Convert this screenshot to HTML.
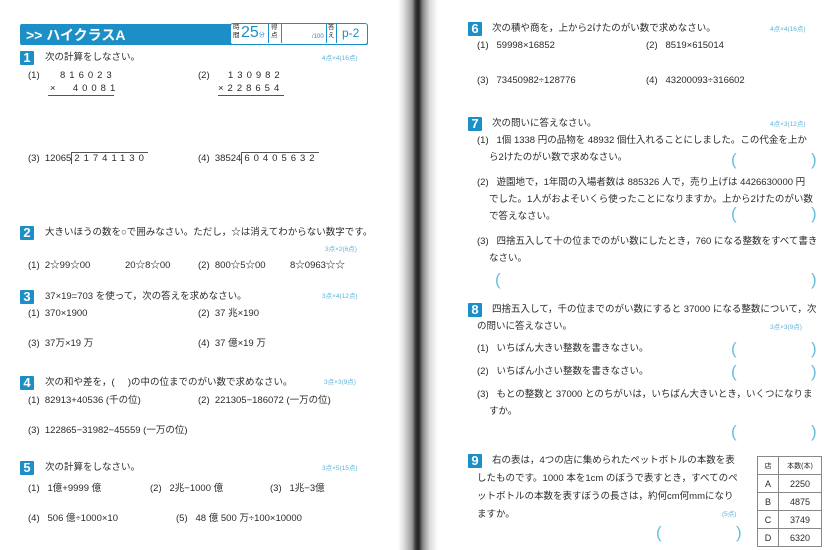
<!DOCTYPE html>
<html><head><meta charset="utf-8"><style>
body{margin:0;width:835px;height:550px;background:#fff;position:relative;overflow:hidden;font-family:"Liberation Sans","Noto Sans CJK JP",sans-serif;color:#2a2a2a}
.t{position:absolute;font-size:9.5px;line-height:12px;white-space:nowrap}
.s{position:absolute;font-size:6.5px;line-height:8px;color:#5fb3d8;white-space:nowrap}
.b{position:absolute;width:14px;height:14px;background:#1b8fc6;color:#fff;font-weight:bold;font-size:13px;line-height:14px;text-align:center;border-radius:1px}
.p{position:absolute;font-size:17px;line-height:20px;color:#6bbde0}
.gut{position:absolute;left:398px;top:0;width:40px;height:550px;background:linear-gradient(90deg,#fff 0%,#ddd 15%,#999 35%,#333 45%,#222 52%,#888 62%,#ddd 80%,#fff 100%)}
.n{letter-spacing:4px}
</style></head><body>
<div class="gut"></div>
<!-- header -->
<div style="position:absolute;left:20px;top:24px;width:348px;height:21px;background:#1b8fc6;border-radius:2px"></div>
<div class="t" style="left:26px;top:28px;font-size:14px;line-height:15px;color:#fff;font-weight:bold">&gt;&gt; ハイクラスA</div>
<div style="position:absolute;left:230px;top:23px;width:136px;height:20px;background:#fff;border:1px solid #1b8fc6;border-radius:3px"></div>
<div class="t" style="left:233px;top:24px;font-size:6.5px;line-height:8px">時<br>間</div>
<div class="t" style="left:241px;top:24px;font-size:16px;line-height:18px;color:#1b8fc6">25<span style="font-size:6px">分</span></div>
<div style="position:absolute;left:268px;top:24px;width:1px;height:19px;background:#1b8fc6"></div>
<div class="t" style="left:271px;top:24px;font-size:6.5px;line-height:8px">得<br>点</div>
<div style="position:absolute;left:281px;top:24px;width:1px;height:19px;background:#1b8fc6"></div>
<div class="t" style="left:312px;top:33px;font-size:6px;line-height:8px;color:#1b8fc6">/100</div>
<div style="position:absolute;left:326px;top:24px;width:1px;height:19px;background:#1b8fc6"></div>
<div class="t" style="left:328px;top:24px;font-size:6.5px;line-height:8px">答<br>え</div>
<div style="position:absolute;left:336px;top:24px;width:1px;height:19px;background:#1b8fc6"></div>
<div class="t" style="left:342px;top:26px;font-size:12px;line-height:14px;color:#1b8fc6">p-2</div>

<!-- Q1 -->
<div class="b" style="left:20px;top:51px">1</div>
<div class="t" style="left:45px;top:52px">次の計算をしなさい。</div>
<div class="s" style="left:322px;top:55px">4点×4(16点)</div>
<div class="t" style="left:28px;top:70px">(1)</div>
<div class="t n" style="left:60px;top:70px">816023</div>
<div class="t n" style="left:50px;top:83px">×&nbsp;&nbsp;40081</div>
<div style="position:absolute;left:48px;top:95px;width:66px;height:1px;background:#555"></div>
<div class="t" style="left:198px;top:70px">(2)</div>
<div class="t n" style="left:228px;top:70px">130982</div>
<div class="t n" style="left:218px;top:83px">×228654</div>
<div style="position:absolute;left:218px;top:95px;width:66px;height:1px;background:#555"></div>
<div class="t" style="left:28px;top:153px">(3)&nbsp;&nbsp;12065<span class="n" style="border-top:1px solid #555;border-left:1px solid #555;padding-left:2px">21741130</span></div>
<div class="t" style="left:198px;top:153px">(4)&nbsp;&nbsp;38524<span class="n" style="border-top:1px solid #555;border-left:1px solid #555;padding-left:2px">60405632</span></div>

<!-- Q2 -->
<div class="b" style="left:20px;top:226px">2</div>
<div class="t" style="left:45px;top:227px">大きいほうの数を○で囲みなさい。ただし，☆は消えてわからない数字です。</div>
<div class="s" style="left:325px;top:246px">3点×2(6点)</div>
<div class="t" style="left:28px;top:260px">(1)&nbsp;&nbsp;2☆99☆00</div>
<div class="t" style="left:125px;top:260px">20☆8☆00</div>
<div class="t" style="left:198px;top:260px">(2)&nbsp;&nbsp;800☆5☆00</div>
<div class="t" style="left:290px;top:260px">8☆0963☆☆</div>

<!-- Q3 -->
<div class="b" style="left:20px;top:290px">3</div>
<div class="t" style="left:45px;top:291px">37×19=703 を使って，次の答えを求めなさい。</div>
<div class="s" style="left:322px;top:293px">3点×4(12点)</div>
<div class="t" style="left:28px;top:308px">(1)&nbsp;&nbsp;370×1900</div>
<div class="t" style="left:198px;top:308px">(2)&nbsp;&nbsp;37 兆×190</div>
<div class="t" style="left:28px;top:338px">(3)&nbsp;&nbsp;37万×19 万</div>
<div class="t" style="left:198px;top:338px">(4)&nbsp;&nbsp;37 億×19 万</div>

<!-- Q4 -->
<div class="b" style="left:20px;top:376px">4</div>
<div class="t" style="left:45px;top:377px">次の和や差を，(&nbsp;&nbsp;&nbsp;&nbsp;&nbsp;)の中の位までのがい数で求めなさい。</div>
<div class="s" style="left:324px;top:379px">3点×3(9点)</div>
<div class="t" style="left:28px;top:395px">(1)&nbsp;&nbsp;82913+40536 (千の位)</div>
<div class="t" style="left:198px;top:395px">(2)&nbsp;&nbsp;221305−186072 (一万の位)</div>
<div class="t" style="left:28px;top:425px">(3)&nbsp;&nbsp;122865−31982−45559 (一万の位)</div>

<!-- Q5 -->
<div class="b" style="left:20px;top:461px">5</div>
<div class="t" style="left:45px;top:462px">次の計算をしなさい。</div>
<div class="s" style="left:322px;top:465px">3点×5(15点)</div>
<div class="t" style="left:28px;top:483px">(1)&nbsp;&nbsp;&nbsp;1億+9999 億</div>
<div class="t" style="left:150px;top:483px">(2)&nbsp;&nbsp;&nbsp;2兆−1000 億</div>
<div class="t" style="left:270px;top:483px">(3)&nbsp;&nbsp;&nbsp;1兆−3億</div>
<div class="t" style="left:28px;top:513px">(4)&nbsp;&nbsp;&nbsp;506 億÷1000×10</div>
<div class="t" style="left:176px;top:513px">(5)&nbsp;&nbsp;&nbsp;48 億 500 万÷100×10000</div>

<!-- Q6 -->
<div class="b" style="left:468px;top:22px">6</div>
<div class="t" style="left:492px;top:23px">次の積や商を，上から2けたのがい数で求めなさい。</div>
<div class="s" style="left:770px;top:26px">4点×4(16点)</div>
<div class="t" style="left:477px;top:40px">(1)&nbsp;&nbsp;&nbsp;59998×16852</div>
<div class="t" style="left:646px;top:40px">(2)&nbsp;&nbsp;&nbsp;8519×615014</div>
<div class="t" style="left:477px;top:75px">(3)&nbsp;&nbsp;&nbsp;73450982÷128776</div>
<div class="t" style="left:646px;top:75px">(4)&nbsp;&nbsp;&nbsp;43200093÷316602</div>

<!-- Q7 -->
<div class="b" style="left:468px;top:117px">7</div>
<div class="t" style="left:492px;top:118px">次の問いに答えなさい。</div>
<div class="s" style="left:770px;top:121px">4点×3(12点)</div>
<div class="t" style="left:477px;top:135px">(1)&nbsp;&nbsp;&nbsp;1個 1338 円の品物を 48932 個仕入れることにしました。この代金を上か</div>
<div class="t" style="left:489px;top:152px">ら2けたのがい数で求めなさい。</div>
<div class="p" style="left:731px;top:150px">(</div><div class="p" style="left:811px;top:150px">)</div>
<div class="t" style="left:477px;top:177px">(2)&nbsp;&nbsp;&nbsp;遊園地で，1年間の入場者数は 885326 人で，売り上げは 4426630000 円</div>
<div class="t" style="left:489px;top:194px">でした。1人がおよそいくら使ったことになりますか。上から2けたのがい数</div>
<div class="t" style="left:489px;top:211px">で答えなさい。</div>
<div class="p" style="left:731px;top:204px">(</div><div class="p" style="left:811px;top:204px">)</div>
<div class="t" style="left:477px;top:236px">(3)&nbsp;&nbsp;&nbsp;四捨五入して十の位までのがい数にしたとき，760 になる整数をすべて書き</div>
<div class="t" style="left:489px;top:253px">なさい。</div>
<div class="p" style="left:495px;top:270px">(</div><div class="p" style="left:811px;top:270px">)</div>

<!-- Q8 -->
<div class="b" style="left:468px;top:303px">8</div>
<div class="t" style="left:492px;top:304px">四捨五入して，千の位までのがい数にすると 37000 になる整数について，次</div>
<div class="t" style="left:477px;top:321px">の問いに答えなさい。</div>
<div class="s" style="left:770px;top:324px">3点×3(9点)</div>
<div class="t" style="left:477px;top:343px">(1)&nbsp;&nbsp;&nbsp;いちばん大きい整数を書きなさい。</div>
<div class="p" style="left:731px;top:339px">(</div><div class="p" style="left:811px;top:339px">)</div>
<div class="t" style="left:477px;top:366px">(2)&nbsp;&nbsp;&nbsp;いちばん小さい整数を書きなさい。</div>
<div class="p" style="left:731px;top:362px">(</div><div class="p" style="left:811px;top:362px">)</div>
<div class="t" style="left:477px;top:389px">(3)&nbsp;&nbsp;&nbsp;もとの整数と 37000 とのちがいは，いちばん大きいとき，いくつになりま</div>
<div class="t" style="left:489px;top:406px">すか。</div>
<div class="p" style="left:731px;top:422px">(</div><div class="p" style="left:811px;top:422px">)</div>

<!-- Q9 -->
<div class="b" style="left:468px;top:454px">9</div>
<div class="t" style="left:492px;top:455px">右の表は，4つの店に集められたペットボトルの本数を表</div>
<div class="t" style="left:477px;top:473px">したものです。1000 本を1cm のぼうで表すとき，すべてのペ</div>
<div class="t" style="left:477px;top:491px">ットボトルの本数を表すぼうの長さは，約何cm何mmになり</div>
<div class="t" style="left:477px;top:509px">ますか。</div>
<div class="s" style="left:722px;top:511px">(5点)</div>
<div class="p" style="left:656px;top:523px">(</div><div class="p" style="left:736px;top:523px">)</div>
<table style="position:absolute;left:757px;top:456px;border-collapse:collapse;font-size:9px;font-family:'Liberation Sans','Noto Sans CJK JP',sans-serif;color:#2a2a2a">
<tr style="height:18px"><td style="border:1px solid #888;width:18px;text-align:center;font-size:7px">店</td><td style="border:1px solid #888;width:40px;text-align:center;font-size:7px">本数(本)</td></tr>
<tr style="height:18px"><td style="border:1px solid #888;text-align:center">A</td><td style="border:1px solid #888;text-align:center">2250</td></tr>
<tr style="height:18px"><td style="border:1px solid #888;text-align:center">B</td><td style="border:1px solid #888;text-align:center">4875</td></tr>
<tr style="height:18px"><td style="border:1px solid #888;text-align:center">C</td><td style="border:1px solid #888;text-align:center">3749</td></tr>
<tr style="height:18px"><td style="border:1px solid #888;text-align:center">D</td><td style="border:1px solid #888;text-align:center">6320</td></tr>
</table>
</body></html>
